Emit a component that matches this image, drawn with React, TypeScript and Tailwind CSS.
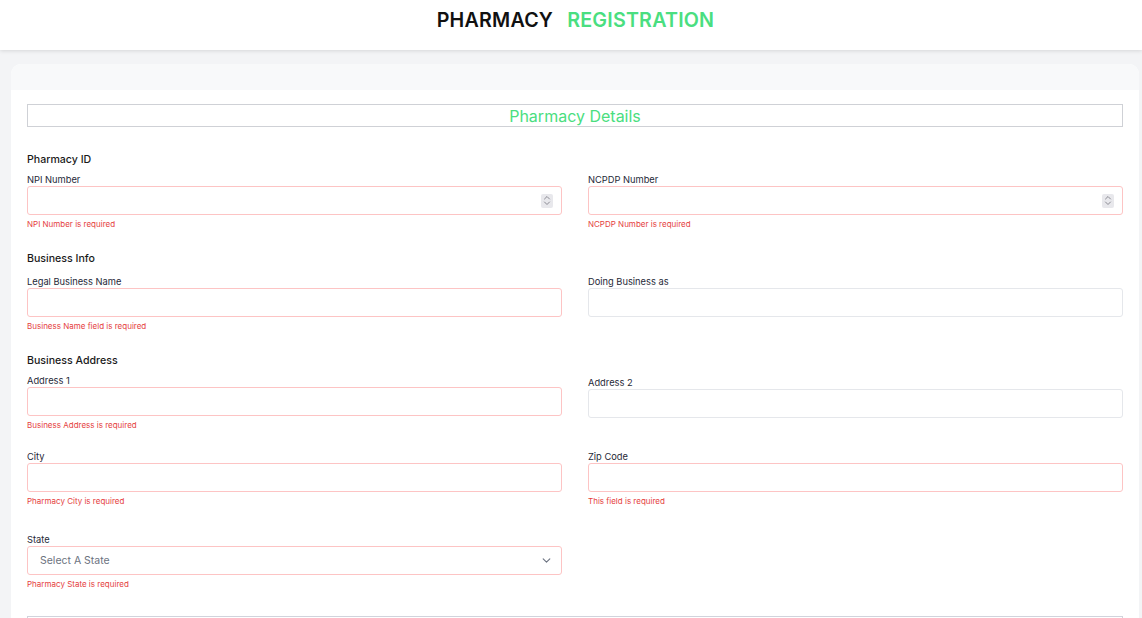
import React, { FC } from 'react';

const Spinner: FC = () => (
  <div className="absolute right-[9px] top-1/2 -translate-y-1/2 w-[12px] h-[14px] bg-[#e8e8ec] rounded-[2px] flex flex-col items-center justify-center">
    <svg width="8" height="11" viewBox="0 0 8 11" fill="none" stroke="#8b8b93" strokeWidth="1" strokeLinecap="round" strokeLinejoin="round">
      <path d="M1.5 4 L4 1.5 L6.5 4" />
      <path d="M1.5 7 L4 9.5 L6.5 7" />
    </svg>
  </div>
);

type FieldProps = {
  label: string;
  error?: string;
  number?: boolean;
  className?: string;
};

const Field: FC<FieldProps> = ({ label, error, number, className = '' }) => (
  <div className={`flex flex-col ${className}`}>
    <label className="text-[9.3px] leading-[13px] text-[#1f2937]">{label}</label>
    <div className="relative">
      <input
        type="text"
        className={`w-full h-[29px] bg-white rounded-[3px] border outline-none px-3 text-xs ${
          error ? 'border-[#fdc4c4]' : 'border-[#e5e7eb]'
        }`}
      />
      {number && <Spinner />}
    </div>
    {error && <p className="mt-[3px] text-[8px] leading-[13px] text-[#e53e3e]">{error}</p>}
  </div>
);

const SectionTitle: FC<{ title: string; className?: string }> = ({ title, className = '' }) => (
  <h3 className={`text-[10.6px] leading-5 text-[#1a1a1a] font-medium ${className}`}>{title}</h3>
);

const App: FC = () => {
  return (
    <div className="min-h-screen w-full bg-[#f3f4f6] overflow-hidden" style={{ fontFamily: 'Inter, "Noto Sans", sans-serif' }}>
      {/* top bar */}
      <header className="h-[50px] bg-white shadow-[0_1px_4px_rgba(0,0,0,0.12)] flex justify-center pt-[6px] pl-[9px]">
        <h1 className="text-[19.7px] leading-7 font-semibold tracking-[0.2px]">
          <span className="text-[#111]">PHARMACY</span>
          <span className="ml-[14px] text-[#4ade80]">REGISTRATION</span>
        </h1>
      </header>

      <div className="mt-[14px] ml-[11px] mr-[3px] bg-white rounded-t-[10px] h-[600px]">
        <div className="h-[26px] bg-[#f8f9fa] rounded-t-[10px]" />
        <div className="px-4 pt-[14px]">
          <div className="h-[23px] border border-[#cfd1d6] flex items-center justify-center">
            <span className="text-base leading-5 text-[#4ade80]">Pharmacy Details</span>
          </div>

          <SectionTitle title="Pharmacy ID" className="mt-[23px] mb-[3px]" />
          <div className="grid grid-cols-2 gap-x-[26px]">
            <Field label="NPI Number" error="NPI Number is required" number />
            <Field label="NCPDP Number" error="NCPDP Number is required" number />
          </div>

          <SectionTitle title="Business Info" className="mt-[18px] mb-[6px]" />
          <div className="grid grid-cols-2 gap-x-[26px] items-start">
            <Field label="Legal Business Name" error="Business Name field is required" />
            <Field label="Doing Business as" />
          </div>

          <SectionTitle title="Business Address" className="mt-[18px] mb-[3px]" />
          <div className="grid grid-cols-2 gap-x-[26px] items-start">
            <Field label="Address 1" error="Business Address is required" />
            <Field label="Address 2" className="mt-[2px]" />
          </div>

          <div className="grid grid-cols-2 gap-x-[26px] items-start mt-[18px]">
            <Field label="City" error="Pharmacy City is required" />
            <Field label="Zip Code" error="This field is required" />
          </div>

          <div className="grid grid-cols-2 gap-x-[26px] items-start mt-[25px]">
            <div className="flex flex-col">
              <label className="text-[9.3px] leading-[13px] text-[#1f2937]">State</label>
              <div className="relative h-[29px] border border-[#fdc4c4] rounded-[3px] flex items-center px-3">
                <span className="text-[10.5px] text-[#6b7280]">Select A State</span>
                <svg className="absolute right-[10px]" width="9" height="5" viewBox="0 0 10 6" fill="none" stroke="#6b7280" strokeWidth="1.3" strokeLinecap="round" strokeLinejoin="round">
                  <path d="M1 1 L5 5 L9 1" />
                </svg>
              </div>
              <p className="mt-[3px] text-[8px] leading-[13px] text-[#e53e3e]">Pharmacy State is required</p>
            </div>
          </div>

          <div className="mt-[25px] h-[40px] border-t border-x border-[#d1d3dc]" />
        </div>
      </div>
    </div>
  );
};

export default App;
